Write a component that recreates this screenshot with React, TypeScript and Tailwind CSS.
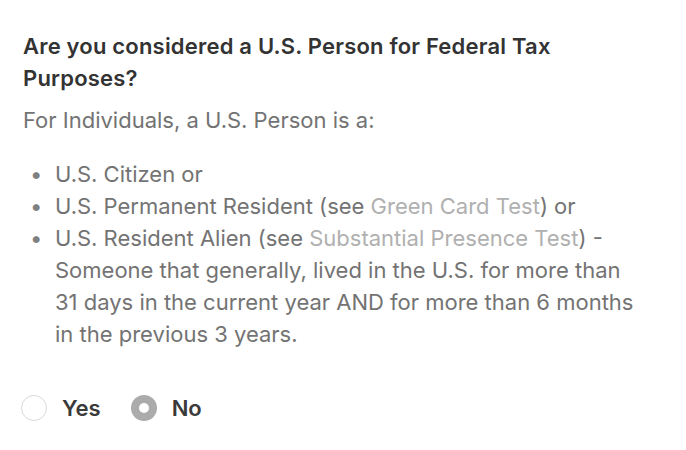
const items = [
  { lead: "U.S. Citizen or" },
  { lead: "U.S. Permanent Resident (see ", link: "Green Card Test", tail: ") or" },
  {
    lead: "U.S. Resident Alien (see ",
    link: "Substantial Presence Test",
    tail: ") - Someone that generally, lived in the U.S. for more than 31 days in the current year AND for more than 6 months in the previous 3 years.",
  },
];

function Radio({ label, checked }: { label: string; checked?: boolean }) {
  return (
    <label className="flex items-center gap-[15px]">
      {checked ? (
        <span className="flex h-[26px] w-[26px] items-center justify-center rounded-full bg-[#ababab]">
          <span className="h-[10px] w-[10px] rounded-full bg-white" />
        </span>
      ) : (
        <span className="h-[26px] w-[26px] rounded-full border-[1.5px] border-[#d9d9d9] bg-white" />
      )}
      <span className="text-[22px] font-semibold text-[#3a3a3a]">{label}</span>
    </label>
  );
}

export default function App() {
  return (
    <div className="min-h-[450px] w-[686px] bg-white px-[23px] pt-[30px] font-['Inter','Noto_Sans',sans-serif] text-[22px] leading-[32px]">
      <h2 className="font-semibold tracking-[0.2px] text-[#333333]">
        Are you considered a U.S. Person for Federal Tax Purposes?
      </h2>
      <p className="mt-[10px] text-[#737373]">For Individuals, a U.S. Person is a:</p>
      <ul className="mt-[22px] text-[#737373]">
        {items.map((it, i) => (
          <li key={i} className="flex">
            <span className="w-[32px] shrink-0 pl-[7px] text-[#808080]">•</span>
            <span className="pr-[20px]">
              {it.lead}
              {it.link && <span className="text-[#b0b0b0]">{it.link}</span>}
              {it.tail}
            </span>
          </li>
        ))}
      </ul>
      <div className="-ml-[2px] mt-[42px] flex items-center gap-[30px]">
        <Radio label="Yes" />
        <Radio label="No" checked />
      </div>
    </div>
  );
}
